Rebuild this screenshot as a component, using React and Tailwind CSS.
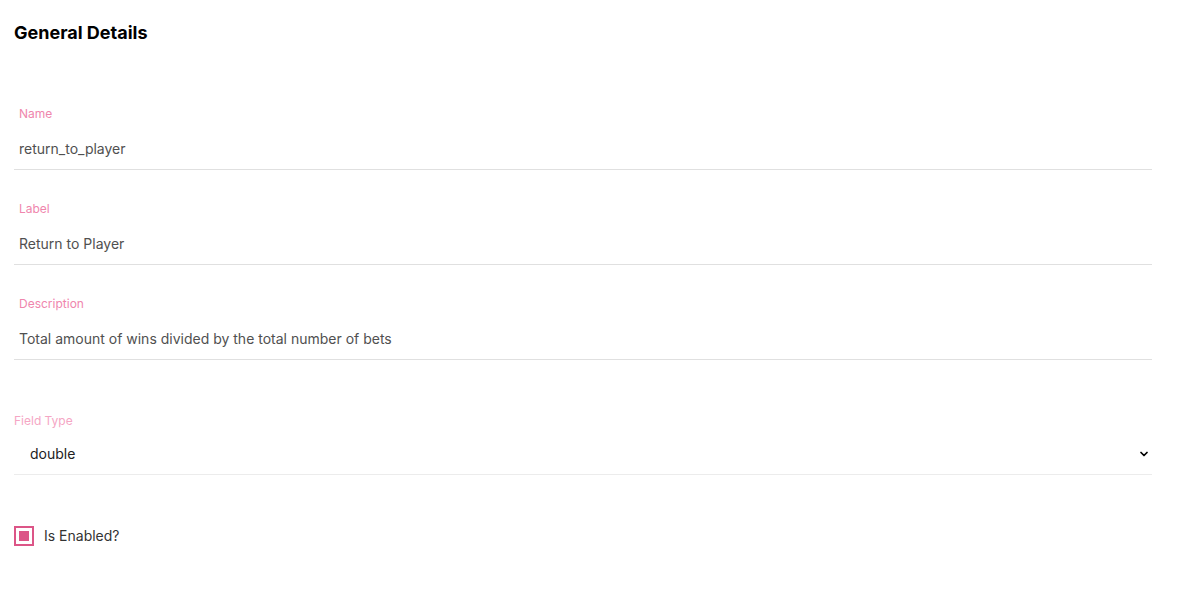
import { useState } from 'react'
import { ChevronDown } from 'lucide-react'

function TextField({ label, value, onChange, className = '' }) {
  return (
    <div className={`border-b border-[#e0e0e0] ${className}`}>
      <label className="block px-[5px] text-[12px] leading-[16px] text-[#ef86ad] mb-[6px]">{label}</label>
      <input
        type="text"
        value={value}
        onChange={(e) => onChange(e.target.value)}
        className="block w-full h-[41px] px-[5px] text-[14px] text-[#505050] bg-transparent outline-none"
      />
    </div>
  )
}

export default function App() {
  const [name, setName] = useState('return_to_player')
  const [label, setLabel] = useState('Return to Player')
  const [description, setDescription] = useState('Total amount of wins divided by the total number of bets')
  const [fieldType, setFieldType] = useState('double')
  const [enabled, setEnabled] = useState(true)

  return (
    <div className="bg-white min-h-[596px] pl-[14px] pr-[28px] pt-[21px] font-['Inter',sans-serif]">
      <h2 className="text-[18px] leading-[24px] font-bold text-black mb-[61px]">General Details</h2>

      <div className="flex flex-col gap-[31px]">
        <TextField label="Name" value={name} onChange={setName} />
        <TextField label="Label" value={label} onChange={setLabel} />
        <TextField label="Description" value={description} onChange={setDescription} />
      </div>

      {/* Field type */}
      <div className="mt-[53px]">
        <label className="block text-[12px] leading-[16px] text-[#f5a6c4] mb-[4px]">Field Type</label>
        <div className="relative border-b border-[#ececec]">
          <select
            value={fieldType}
            onChange={(e) => setFieldType(e.target.value)}
            className="block w-full h-[41px] pl-[16px] pr-8 appearance-none bg-transparent text-[14px] text-[#222] outline-none"
          >
            <option value="double">double</option>
            <option value="integer">integer</option>
            <option value="string">string</option>
            <option value="boolean">boolean</option>
          </select>
          <ChevronDown className="absolute right-[2px] top-1/2 -translate-y-1/2 w-[12px] h-[12px] text-black pointer-events-none" strokeWidth={3.5} />
        </div>
      </div>

      {/* Enabled */}
      <label className="mt-[50px] flex items-center gap-[10px] cursor-pointer w-fit">
        <button
          type="button"
          onClick={() => setEnabled(!enabled)}
          className="w-[20px] h-[20px] border-2 border-[#dc5587] flex items-center justify-center"
        >
          {enabled && <span className="w-[10px] h-[10px] bg-[#dc5587]" />}
        </button>
        <span className="text-[14px] text-[#333]">Is Enabled?</span>
      </label>
    </div>
  )
}
